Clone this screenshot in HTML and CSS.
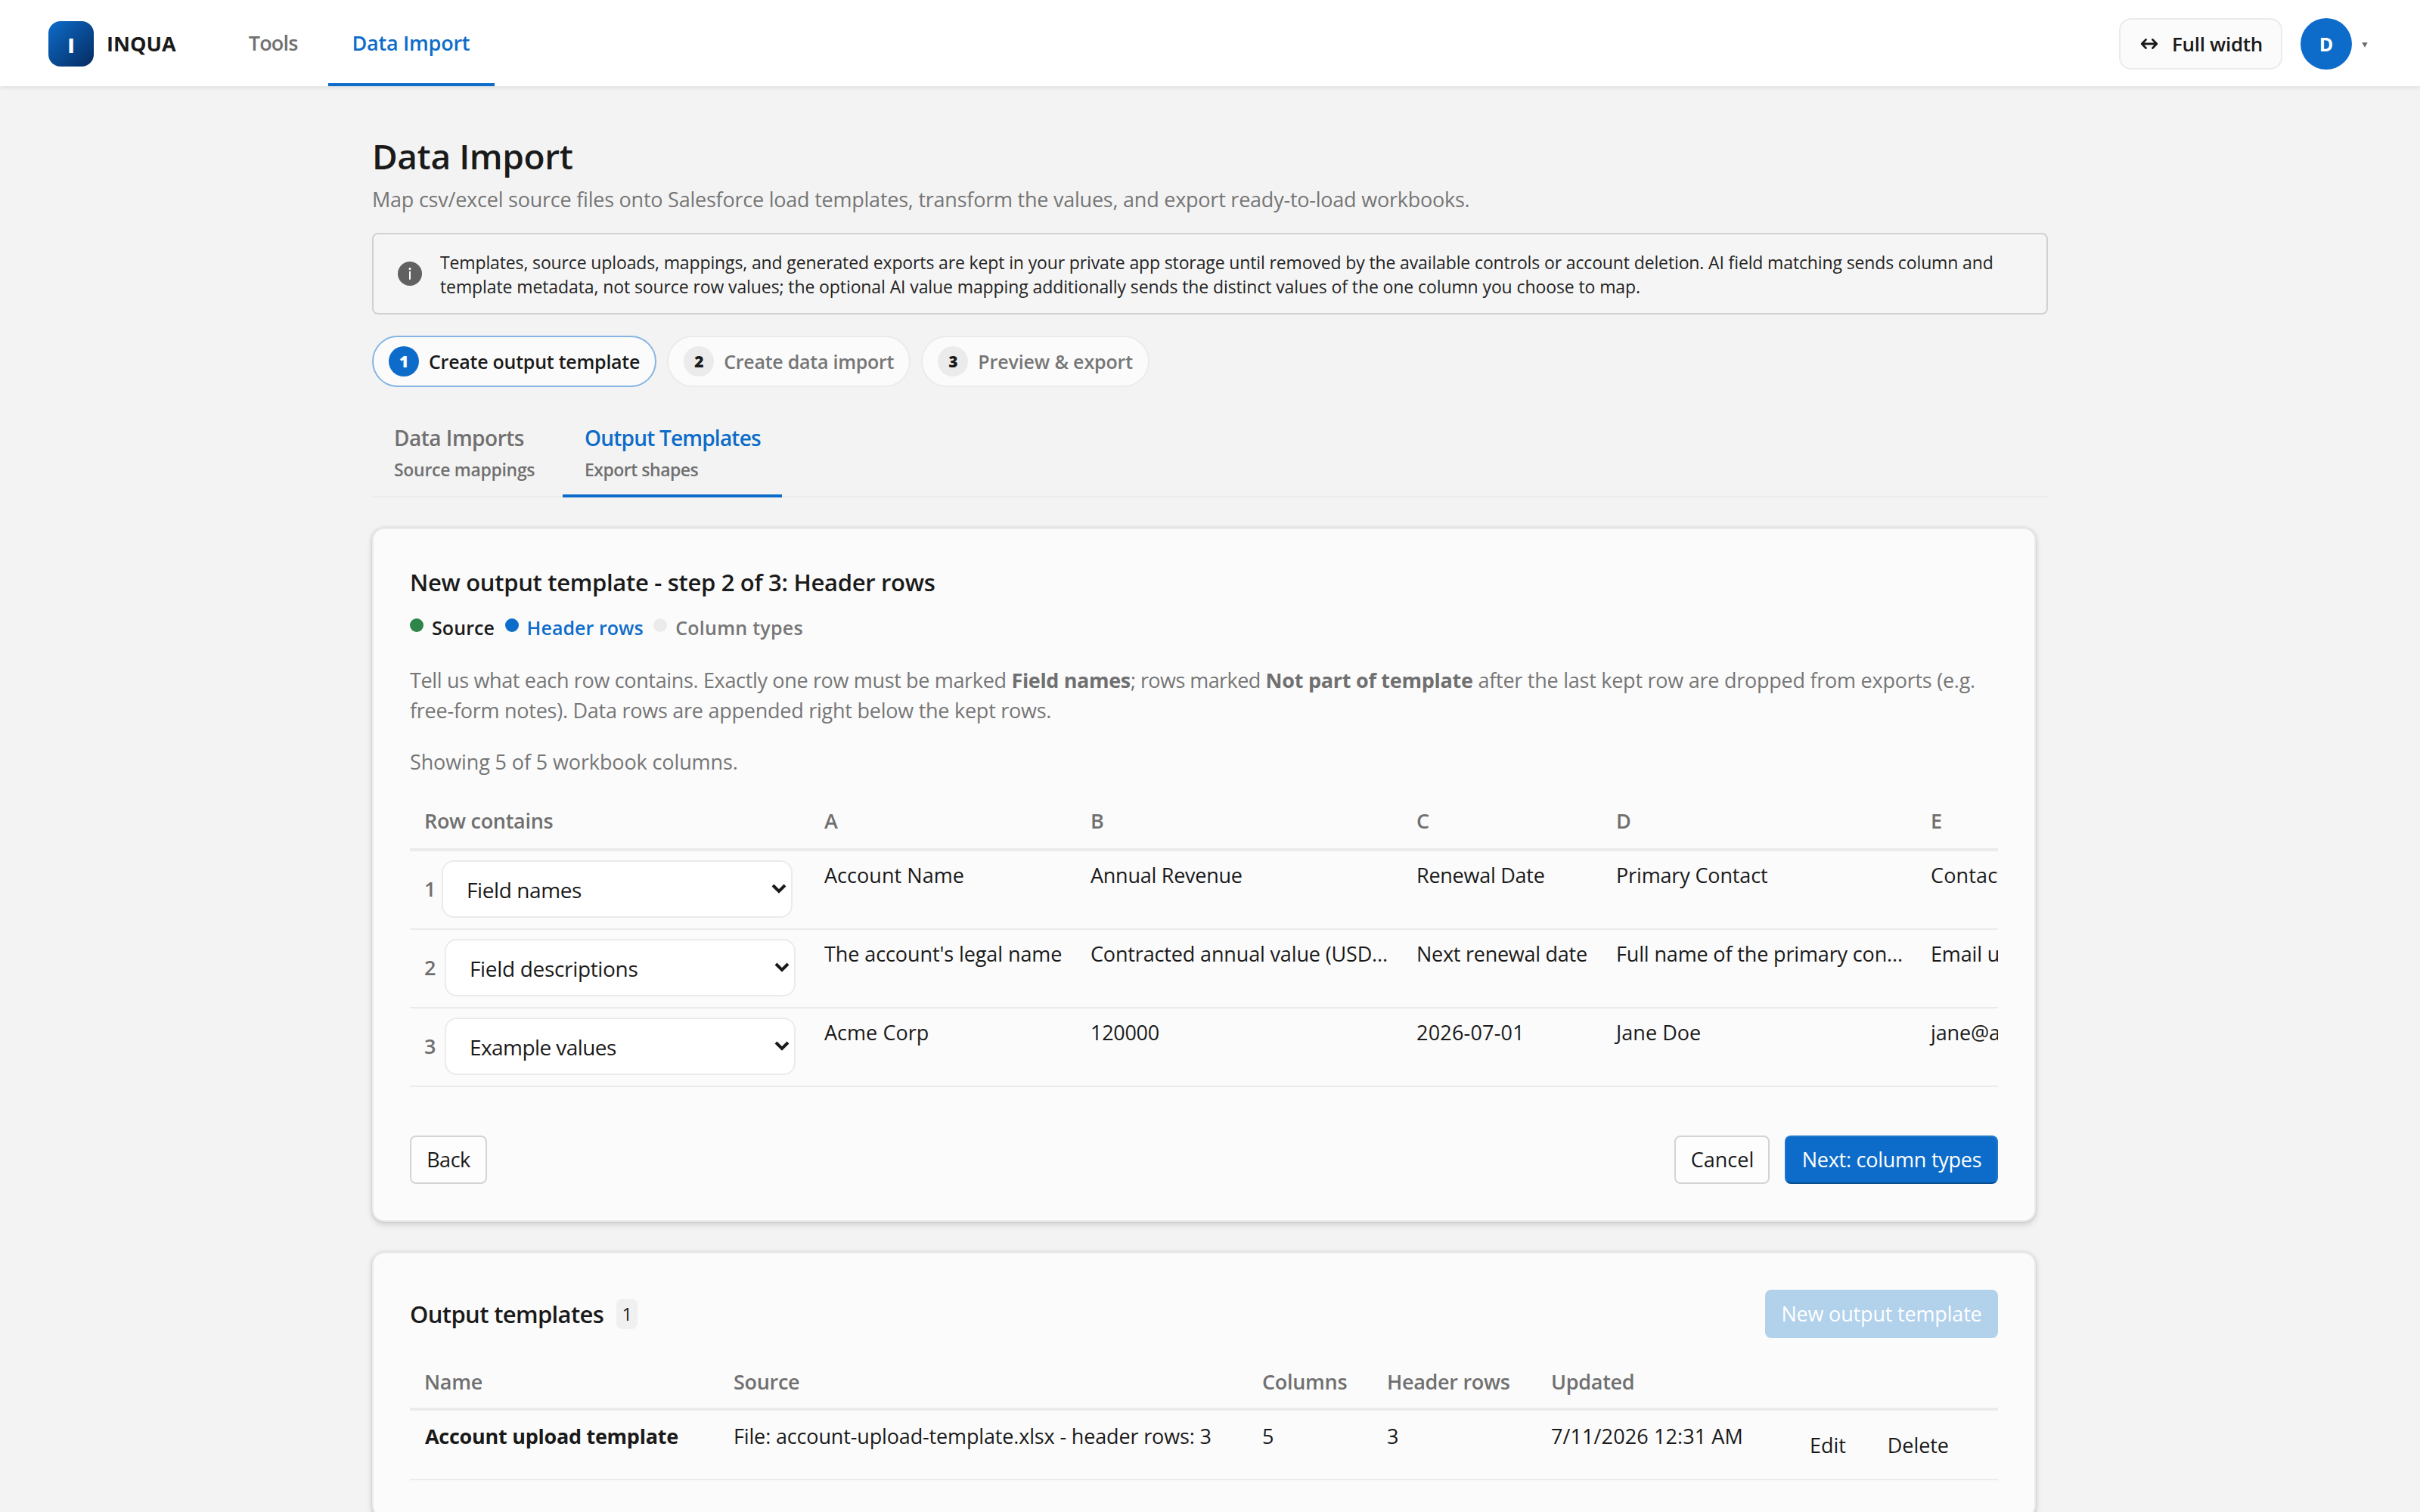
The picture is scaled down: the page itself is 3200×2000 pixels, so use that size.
FILE: index.html
```html
<!DOCTYPE html>
<html lang="en">
<head>
<meta charset="utf-8">
<title>Data Import - INQUA</title>
<link rel="stylesheet" href="styles.css">
</head>
<body>
<header class="topbar">
  <div class="logo">I</div>
  <div class="brand">INQUA</div>
  <nav class="nav">
    <a class="nav-item nav-tools">Tools</a>
    <a class="nav-item is-active">Data Import</a>
  </nav>
  <div class="top-actions">
    <button class="width-toggle">
      <svg width="26" height="26" viewBox="0 0 26 26" fill="none" stroke="currentColor" stroke-width="2.8" stroke-linecap="round" stroke-linejoin="round"><path d="M8.6 7.4L3.2 13l5.4 5.6M17.4 7.4l5.4 5.6-5.4 5.6M3.2 13h19.6"/></svg>
      <span>Full width</span>
    </button>
    <div class="avatar">D</div>
    <svg class="caret" width="8" height="7" viewBox="0 0 8 7"><path d="M0.3 0.3h7.4L4 6.8z" fill="#6b6b6b"/></svg>
  </div>
</header>

<main class="page">
  <h1 class="title">Data Import</h1>
  <p class="subtitle">Map csv/excel source files onto Salesforce load templates, transform the values, and export ready-to-load workbooks.</p>

  <div class="notice">
    <svg class="notice-icon" width="32" height="32" viewBox="0 0 32 32"><circle cx="16" cy="16" r="16" fill="#616161"/><circle cx="16" cy="9.6" r="1.5" fill="#fff"/><path d="M16 13.6V23" stroke="#fff" stroke-width="2" stroke-linecap="round"/></svg>
    <p class="notice-text"><span class="notice-lead">Templates, source uploads, mappings, and generated exports are kept in your private app storage until removed by the available controls or account deletion. AI field matching sends column and</span> template metadata, not source row values; the optional AI value mapping additionally sends the distinct values of the one column you choose to map.</p>
  </div>

  <div class="pills">
    <div class="pill is-active"><span class="pill-num">1</span><span>Create output template</span></div>
    <div class="pill"><span class="pill-num">2</span><span>Create data import</span></div>
    <div class="pill pill-last"><span class="pill-num">3</span><span>Preview &amp; export</span></div>
  </div>

  <div class="tabs">
    <div class="tab"><span class="tab-title">Data Imports</span><span class="tab-sub">Source mappings</span></div>
    <div class="tab is-active"><span class="tab-title">Output Templates</span><span class="tab-sub">Export shapes</span></div>
  </div>

  <section class="card">
    <h2 class="card-title">New output template - step 2 of 3: Header rows</h2>
    <div class="steps">
      <span class="dot dot-done"></span><span class="step step-done">Source</span>
      <span class="dot dot-now"></span><span class="step step-now">Header rows</span>
      <span class="dot"></span><span class="step step-next">Column types</span>
    </div>
    <p class="help"><span class="help-a">Tell us what each row contains. Exactly one row must be marked</span> <b class="b-a">Field names</b><span class="help-b">; rows marked</span> <b class="b-b">Not part of template</b> after the last kept row are dropped from exports (e.g. free-form notes). Data rows are appended right below the kept rows.</p>
    <p class="count">Showing 5 of 5 workbook columns.</p>
    <div class="table-clip">
      <table class="table preview">
        <colgroup><col class="p0"><col class="p1"><col class="p2"><col class="p3"><col class="p4"><col class="p5"></colgroup>
        <thead><tr><th>Row contains</th><th>A</th><th>B</th><th>C</th><th>D</th><th>E</th></tr></thead>
        <tbody>
          <tr>
            <td><div class="picker"><span class="row-no no-first">1</span><div class="select"><span class="opt-a">Field names</span><svg class="chev" width="20" height="13" viewBox="0 0 20 13"><path d="M2 2l8 8L18 2" fill="none" stroke="#1a1a1a" stroke-width="4"/></svg></div></div></td>
            <td><span class="wide">Account Name</span></td><td><span class="tight">Annual Revenue</span></td><td><span class="tight">Renewal Date</span></td><td>Primary Contact</td><td><span class="spaced">Contact</span></td>
          </tr>
          <tr>
            <td><div class="picker"><span class="row-no">2</span><div class="select"><span class="opt-b">Field descriptions</span><svg class="chev" width="20" height="13" viewBox="0 0 20 13"><path d="M2 2l8 8L18 2" fill="none" stroke="#1a1a1a" stroke-width="4"/></svg></div></div></td>
            <td><span class="legal">The account's legal name</span></td><td>Contracted annual value (USD...</td><td><span class="tight">Next renewal date</span></td><td>Full name of the primary con...</td><td>Email us</td>
          </tr>
          <tr>
            <td><div class="picker"><span class="row-no">3</span><div class="select"><span class="opt-c">Example values</span><svg class="chev" width="20" height="13" viewBox="0 0 20 13"><path d="M2 2l8 8L18 2" fill="none" stroke="#1a1a1a" stroke-width="4"/></svg></div></div></td>
            <td><span class="wide">Acme Corp</span></td><td><span class="digits">120000</span></td><td><span class="iso">2026-07-01</span></td><td><span class="wide">Jane Doe</span></td><td>jane@ac</td>
          </tr>
        </tbody>
      </table>
    </div>
    <div class="buttons">
      <button class="btn btn-back">Back</button>
      <button class="btn btn-cancel">Cancel</button>
      <button class="btn btn-primary">Next: column types</button>
    </div>
  </section>

  <section class="card">
    <div class="card-head">
      <h2 class="card-title title-list">Output templates</h2>
      <span class="badge">1</span>
      <button class="btn btn-disabled">New output template</button>
    </div>
    <table class="table list">
      <colgroup><col class="l0"><col class="l1"><col class="l2"><col class="l3"><col class="l4"><col class="l5"></colgroup>
      <thead><tr><th>Name</th><th>Source</th><th>Columns</th><th>Header rows</th><th>Updated</th><th></th></tr></thead>
      <tbody>
        <tr>
          <td><b class="b-name">Account upload template</b></td>
          <td>File: account-upload-template.xlsx - header rows: 3</td>
          <td>5</td><td>3</td>
          <td><span class="stamp">7/11/2026 12:31 AM</span></td>
          <td><div class="row-actions"><button class="btn-ghost">Edit</button><button class="btn-ghost">Delete</button></div></td>
        </tr>
      </tbody>
    </table>
  </section>
</main>
</body>
</html>
```
FILE: styles.css
```css
* { box-sizing: border-box; }
html, body { height: 2000px; overflow: hidden; }
body {
  margin: 0;
  background: #f3f3f3;
  color: #1a1a1a;
  font: 400 27px/40px "Open Sans", "Noto Sans", sans-serif;
}
h1, h2, p { margin: 0; }
button { font: inherit; color: inherit; letter-spacing: inherit; margin: 0; }

/* Top bar */
.topbar {
  position: relative;
  display: flex;
  align-items: center;
  height: 114px;
  padding: 2px 69px 0 64px;
  background: #fff;
  box-shadow: 0 2px 6px rgba(0, 0, 0, .09);
}
.logo {
  display: flex;
  align-items: center;
  justify-content: center;
  width: 60px;
  height: 60px;
  padding-top: 4px;
  border-radius: 16px;
  background: linear-gradient(135deg, #0d6cca, #052b60);
  color: #fff;
  font-size: 26px;
  font-weight: 800;
}
.brand { margin-left: 17px; font-weight: 700; letter-spacing: .05px; }
.nav { display: flex; align-self: stretch; gap: 8px; margin: -2px 0 0 65px; }
.nav-item {
  padding: 37px 32px 0;
  border-bottom: 4px solid transparent;
  color: #707070;
  font-weight: 600;
  letter-spacing: -.25px;
}
.nav-tools { padding-left: 31px; letter-spacing: -.8px; }
.nav-item.is-active { min-width: 220px; color: #0d6cca; border-color: #0d6cca; }
.top-actions { display: flex; align-items: center; margin-left: auto; }
.width-toggle {
  display: flex;
  align-items: center;
  gap: 17px;
  width: 216px;
  height: 68px;
  padding: 0 0 0 25px;
  border: 2px solid #ebebeb;
  border-radius: 16px;
  background: #fbfbfb;
  font-size: 26px;
  font-weight: 600;
  letter-spacing: -.3px;
  white-space: nowrap;
}
.avatar {
  display: flex;
  align-items: center;
  justify-content: center;
  width: 68px;
  height: 68px;
  margin-left: 24px;
  border-radius: 50%;
  background: #0d6cca;
  color: #fff;
  font-size: 25px;
  font-weight: 700;
}
.caret { margin-left: 13px; position: relative; top: 1px; }

/* Page heading */
.page { width: 2216px; margin: 0 auto; padding-top: 62px; }
.title { font-size: 46px; line-height: 60px; font-weight: 600; letter-spacing: -.4px; }
.subtitle { margin-top: 8px; color: #767676; letter-spacing: -.23px; }
.notice {
  display: flex;
  align-items: center;
  gap: 24px;
  height: 108px;
  margin-top: 24px;
  padding: 0 32px;
  border: 2px solid #d1d1d1;
  border-radius: 8px;
  background: #f5f5f5;
}
.notice-icon { flex: none; }
.notice-text { padding-top: 2px; color: #242424; font-size: 23px; line-height: 32px; letter-spacing: -.1px; }
.notice-lead { letter-spacing: -.133px; }

/* Numbered stages */
.pills { display: flex; gap: 14px; margin-top: 28px; }
.pill {
  display: flex;
  align-items: center;
  gap: 13px;
  height: 68px;
  padding: 0 20px;
  border: 2px solid #ebebeb;
  border-radius: 34px;
  background: #fbfbfb;
  color: #767676;
  font-size: 25px;
  font-weight: 600;
  letter-spacing: -.25px;
}
.pill-last { letter-spacing: -.13px; }
.pill.is-active { border-color: #86b5e4; color: #1a1a1a; }
.pill-num {
  width: 40px;
  height: 40px;
  border-radius: 50%;
  background: #ebebeb;
  color: #1a1a1a;
  font-size: 21px;
  font-weight: 800;
  line-height: 40px;
  text-align: center;
}
.pill.is-active .pill-num { background: #0d6cca; color: #fff; }

/* Tabs */
.tabs {
  display: flex;
  gap: 8px;
  height: 114px;
  margin-top: 32px;
  border-bottom: 2px solid #ebebeb;
}
.tab {
  display: flex;
  flex-direction: column;
  height: 114px;
  width: 244px;
  padding: 15px 0 0 29px;
  border-bottom: 4px solid transparent;
  color: #707070;
  font-weight: 600;
  white-space: nowrap;
}
.tab.is-active { width: 290px; border-color: #0d6cca; }
.tab.is-active .tab-title { color: #0d6cca; letter-spacing: -.79px; }
.tab-title { font-size: 28px; letter-spacing: -.5px; }
.tab-sub { margin-top: 6px; font-size: 23px; line-height: 32px; letter-spacing: -.3px; }
.tab.is-active .tab-sub { letter-spacing: -.5px; }

/* Cards */
.card {
  width: 2200px;
  margin-top: 40px;
  padding: 48px;
  border: 2px solid #ebebeb;
  border-radius: 16px;
  background: #fbfbfb;
  box-shadow: 0 0 4px rgba(0, 0, 0, .12), 0 4px 8px rgba(0, 0, 0, .14);
}
.card-title { font-size: 31px; line-height: 44px; font-weight: 600; letter-spacing: -.31px; }
.title-list { letter-spacing: -.64px; }

.steps { display: flex; margin-top: 20px; font-size: 25px; line-height: 36px; font-weight: 600; }
.dot { width: 18px; height: 18px; margin: 6px 11px 0 0; border-radius: 50%; background: #ebebeb; }
.dot-done { background: #2e8548; }
.dot-now { background: #0d6cca; }
.step { margin-right: 13.5px; }
.step-done { letter-spacing: .1px; }
.step-now { color: #0d6cca; letter-spacing: .05px; }
.step-next { color: #767676; letter-spacing: .25px; }

.help { margin-top: 32px; color: #767676; letter-spacing: -.25px; }
.help b { color: #707070; font-weight: 700; }
.help-a { letter-spacing: -.34px; }
.help-b { letter-spacing: -.55px; }
.b-a { letter-spacing: -.35px; }
.b-b { letter-spacing: -.27px; }
.count { margin-top: 28px; color: #767676; letter-spacing: -.12px; }

/* Tables */
.table { table-layout: fixed; border-collapse: separate; border-spacing: 0; letter-spacing: -.15px; }
.table th, .table td { padding: 0 0 0 20px; text-align: left; vertical-align: top; white-space: nowrap; }
.table th { border-bottom: 4px solid #ebebeb; color: #707070; font-weight: 600; letter-spacing: -.3px; }
.table td { border-bottom: 2px solid #ebebeb; }
.table th:first-child { padding-left: 19px; }

.table-clip { margin-top: 20px; overflow: hidden; }
.preview { width: 2241px; }
.preview th { height: 78px; padding-top: 18px; }
.preview td { height: 104px; padding-top: 12px; }
.p0 { width: 528px; }
.p1 { width: 352px; }
.p2 { width: 431px; }
.p3 { width: 264px; }
.p4 { width: 416px; }
.p5 { width: 250px; }
.wide { letter-spacing: .04px; }
.tight { letter-spacing: -.26px; }
.legal { letter-spacing: -.09px; }
.digits { letter-spacing: -.3px; }
.iso { letter-spacing: .2px; }
.spaced { letter-spacing: .15px; }

.picker { display: flex; align-items: center; margin-left: -1px; }
.row-no { width: 27px; color: #707070; font-weight: 600; }
.no-first { width: 23px; }
.select {
  display: flex;
  align-items: center;
  justify-content: space-between;
  width: 464px;
  height: 76px;
  padding: 1px 6px 0 31px;
  border: 2px solid #ebebeb;
  border-radius: 16px;
  background: #fff;
  font-size: 28px;
}
.chev { margin-top: -2px; }
.opt-a { letter-spacing: -.41px; }
.opt-b { letter-spacing: -.33px; }
.opt-c { letter-spacing: -.57px; }

/* Buttons */
.buttons { display: flex; gap: 20px; margin-top: 64px; }
.btn {
  height: 64px;
  padding: 0;
  border: 2px solid #d4d4d4;
  border-radius: 8px;
  background: #fdfdfd;
  white-space: nowrap;
}
.btn-back { width: 102px; margin-right: auto; letter-spacing: -.46px; }
.btn-cancel { width: 126px; padding-left: 1px; }
.btn-primary {
  width: 282px;
  padding-left: 1px;
  border-color: #1f77ce #1f77ce #0b4d91;
  background: #0d6cca;
  color: #fff;
  font-weight: 500;
  letter-spacing: -.25px;
}
.btn-disabled {
  width: 308px;
  margin-left: auto;
  border-color: #b2d1eb;
  background: #b2d1eb;
  color: #fff;
  letter-spacing: -.17px;
}
.btn-ghost { height: 64px; padding: 0 22px; border: 0; background: transparent; }

.card-head { display: flex; align-items: center; }
.badge {
  width: 28px;
  height: 40px;
  margin-left: 17px;
  border-radius: 8px;
  background: #f0f0f0;
  font-size: 23px;
  text-align: center;
}

.list { width: 2100px; margin-top: 20px; }
.list th { height: 76px; padding-top: 18px; }
.list td { height: 92px; padding-top: 14px; }
.l0 { width: 408px; }
.l1 { width: 699px; }
.l2 { width: 165px; }
.l3 { width: 217px; }
.l4 { width: 320px; }
.l5 { width: 291px; }
.b-name { letter-spacing: -.27px; }
.stamp { letter-spacing: .1px; }
.row-actions { display: flex; gap: 11px; letter-spacing: -.05px; }
```
